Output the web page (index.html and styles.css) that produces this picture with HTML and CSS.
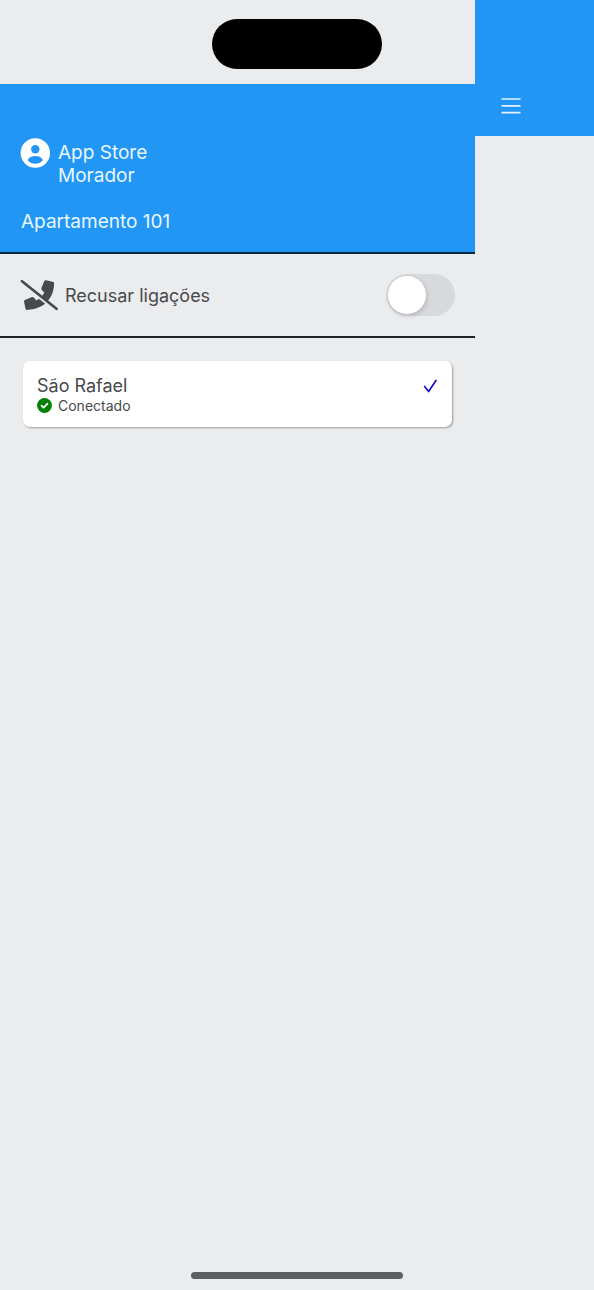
FILE: index.html
```html
<!DOCTYPE html>
<html lang="pt-BR">
<head>
<meta charset="utf-8">
<meta name="viewport" content="width=device-width, initial-scale=1">
<title>São Rafael</title>
<link rel="stylesheet" href="styles.css">
</head>
<body>
<div class="screen">
  <aside class="drawer">
    <header class="profile">
      <div class="user">
        <svg class="avatar" viewBox="0 0 30 30" aria-hidden="true">
          <circle cx="15.300" cy="15" r="14.700" fill="#fff"/>
          <circle cx="15.300" cy="11.300" r="4.200" fill="#2296f4"/>
          <path d="M7.700 22.200C8.700 19.500 11.800 18.100 15.300 18.100s6.600 1.400 7.600 4.100C21 24.600 18.300 25.800 15.300 25.800s-5.700-1.200-7.600-3.600z" fill="#2296f4"/>
        </svg>
        <div class="user-text">
          <div>App Store</div>
          <div>Morador</div>
        </div>
      </div>
      <div class="unit">Apartamento 101</div>
    </header>
    <div class="setting">
      <svg class="no-call" viewBox="0 0 38 32" aria-hidden="true">
        <path d="M24.200 2.200C24.500 1.400 25.200 1.100 26 1.300L32.600 2.800C33.600 3 34.100 3.600 34.100 4.600C34 19 24 30.600 7 30.900C6.200 30.900 5.700 30.500 5.500 29.700L4 22.800C3.900 22 4.200 21.400 4.900 21L12 18.100C12.700 17.800 13.300 18 13.800 18.600L16.300 21.500C20 19.700 22.500 17 24.300 13.400L21.800 11C21.200 10.400 21.100 9.800 21.400 9.100Z" fill="#48494b"/>
        <path d="M0 2.900L35.600 31.400" stroke="#ebecee" stroke-width="2.600"/>
        <path d="M2 2.200L36.500 29.800" stroke="#48494b" stroke-width="2.700" stroke-linecap="round"/>
      </svg>
      <label class="setting-label" for="refuse">Recusar ligações</label>
      <input class="toggle" type="checkbox" role="switch" id="refuse">
    </div>
    <button class="place" type="button">
      <span class="place-text">
        <span class="place-name">São Rafael</span>
        <span class="status">
          <svg class="status-icon" viewBox="0 0 15 15" aria-hidden="true">
            <circle cx="7.500" cy="7.500" r="7.400" fill="#038003"/>
            <path d="M4.500 7.600L6.600 9.700L10.500 5.600" fill="none" stroke="#fff" stroke-width="1.700" stroke-linecap="round" stroke-linejoin="round"/>
          </svg>
          <span>Conectado</span>
        </span>
      </span>
      <svg class="selected" viewBox="0 0 14 14" aria-hidden="true">
        <path d="M1.700 7.500L5.600 12.500L13 1.500" fill="none" stroke="#1c0fc0" stroke-width="1.700" stroke-linecap="round" stroke-linejoin="round"/>
      </svg>
    </button>
  </aside>
  <main class="content">
    <div class="topbar">
      <button class="menu" type="button" aria-label="Menu">
        <svg class="menu-icon" viewBox="0 0 20 16" aria-hidden="true">
          <path d="M.5 1H19.500M.5 7.800H19.500M.5 14.600H19.500" stroke="#e2f3fe" stroke-width="1.700"/>
        </svg>
      </button>
    </div>
  </main>
  <div class="island"></div>
  <div class="home-bar"></div>
</div>
</body>
</html>
```
FILE: styles.css
```css
* {
  box-sizing: border-box;
}

body {
  margin: 0;
  background: #ebecee;
  color: #48494b;
  font-family: Inter, "Liberation Sans", sans-serif;
  font-size: 18px;
  line-height: 23px;
}

.screen {
  position: relative;
  display: grid;
  grid-template-columns: 80% 1fr;
  min-height: 100vh;
}

.drawer {
  padding-top: 84px;
}

.profile {
  padding: 57px 21px 19px;
  border-bottom: 2px solid #0b2440;
  background: #2296f4;
  color: #e9f6ff;
  font-size: 19px;
}

.user {
  display: flex;
  gap: 8px;
}

.avatar {
  flex: none;
  width: 30px;
  height: 30px;
  margin-top: -3px;
  margin-left: -1px;
}

.unit {
  margin-top: 23px;
}

.setting {
  display: flex;
  align-items: center;
  gap: 7px;
  padding: 20px;
  border-bottom: 2px solid #222325;
}

.no-call {
  flex: none;
  width: 38px;
  height: 32px;
}

.setting-label {
  flex: 1;
}

.toggle {
  appearance: none;
  flex: none;
  width: 69px;
  height: 42px;
  margin: 0;
  padding: 2px;
  border-radius: 21px;
  background: #d8d9dc;
}

.toggle::before {
  content: "";
  display: block;
  width: 38px;
  height: 38px;
  border-radius: 50%;
  background: #fff;
  box-shadow: 1px 2px 5px rgba(0, 0, 0, 0.16);
}

.toggle:checked {
  background: #2296f4;
}

.toggle:checked::before {
  margin-left: auto;
}

.place {
  display: flex;
  align-items: flex-start;
  justify-content: space-between;
  width: calc(100% - 46px);
  margin: 23px;
  padding: 13px 15px 13px 14px;
  border: 0;
  border-radius: 7px;
  background: #fff;
  box-shadow: 1px 1px 2px rgba(0, 0, 0, 0.35);
  color: inherit;
  font: inherit;
  text-align: left;
}

.place-text,
.place-name {
  display: block;
}

.status {
  display: flex;
  align-items: center;
  gap: 6px;
  font-size: 14px;
  line-height: 17px;
}

.status-icon {
  width: 15px;
  height: 15px;
}

.selected {
  width: 14px;
  height: 14px;
  margin-top: 5px;
}

.topbar {
  display: flex;
  align-items: flex-end;
  height: 136px;
  padding: 0 26px 22px;
  background: #2296f4;
}

.menu {
  display: flex;
  padding: 0;
  border: 0;
  background: none;
}

.menu-icon {
  width: 20px;
  height: 16px;
}

.island {
  position: absolute;
  top: 19px;
  left: 50%;
  width: 170px;
  height: 50px;
  border-radius: 25px;
  background: #000;
  transform: translateX(-50%);
}

.home-bar {
  position: absolute;
  bottom: 11px;
  left: 50%;
  width: 212px;
  height: 7px;
  border-radius: 4px;
  background: #5e5f61;
  transform: translateX(-50%);
}
```
